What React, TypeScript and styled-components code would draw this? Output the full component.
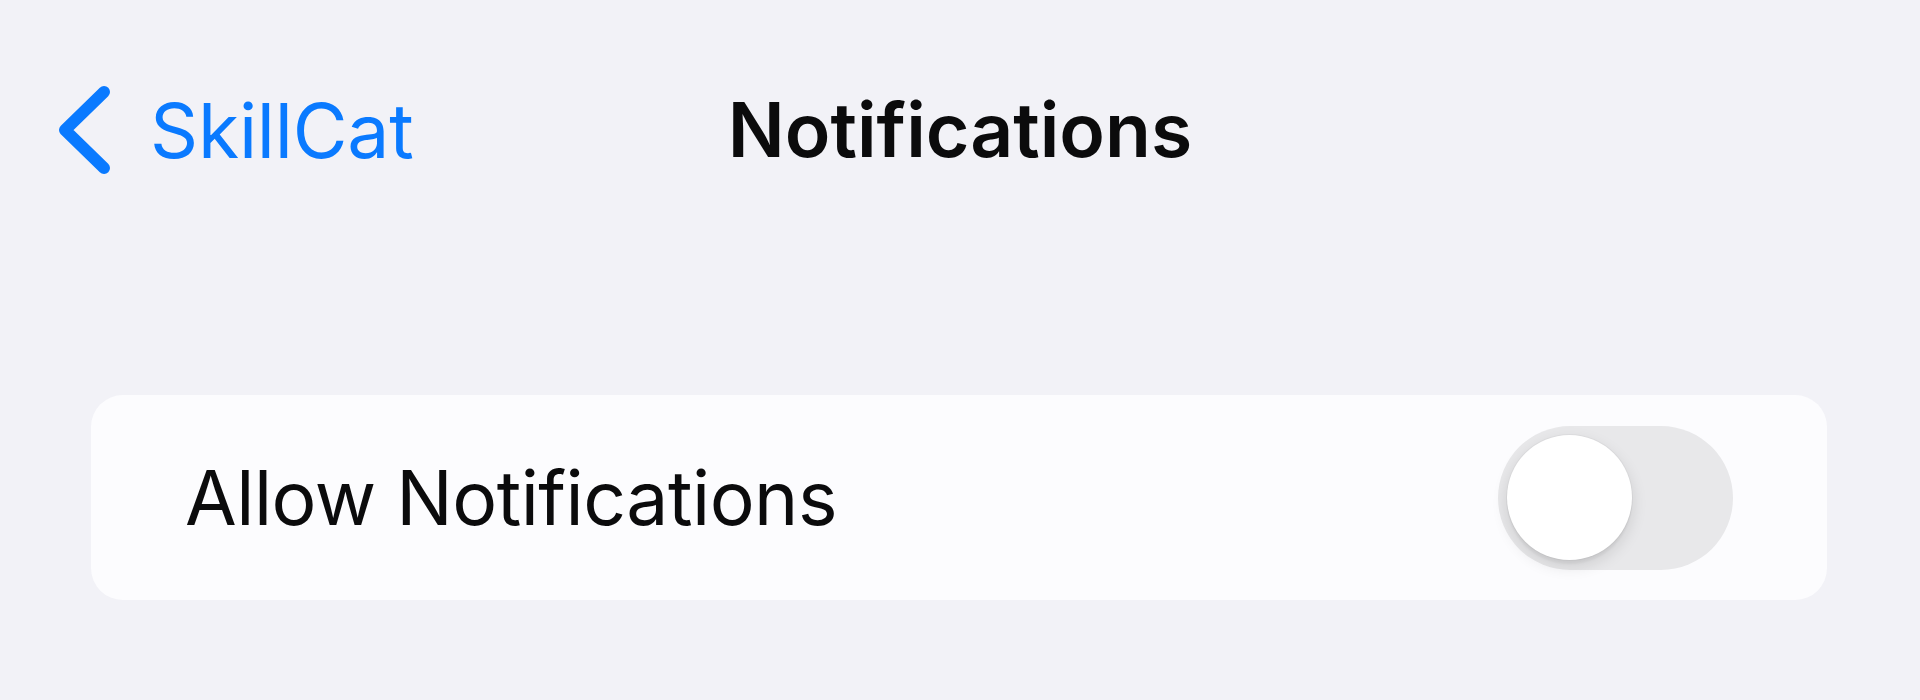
import React from "react";
import styled, { createGlobalStyle } from "styled-components";

const GlobalStyle = createGlobalStyle`
  html, body {
    margin: 0;
    padding: 0;
    background: #f2f2f7;
  }
  body {
    font-family: Inter, "Noto Sans", "Liberation Sans", sans-serif;
    -webkit-font-smoothing: antialiased;
  }
`;

const Page = styled.div`
  width: 1920px;
  height: 700px;
  box-sizing: border-box;
  padding: 70px 93px 0 54px;
  background: #f2f2f7;
  display: flex;
  flex-direction: column;
`;

const NavBar = styled.header`
  height: 120px;
  display: grid;
  grid-template-columns: 1fr auto 1fr;
  align-items: center;
  margin-right: -39px;
`;

const BackButton = styled.button`
  display: flex;
  align-items: center;
  gap: 36px;
  border: none;
  background: none;
  padding: 0;
  cursor: pointer;
  color: #0a7aff;
  font-family: inherit;
  font-size: 75px;
  font-weight: 400;
  letter-spacing: -0.2px;
  justify-self: start;
`;

const Chevron = styled.svg`
  width: 60px;
  height: 90px;
  flex: none;
`;

const Title = styled.h1`
  margin: 0;
  font-size: 75px;
  font-weight: 600;
  color: #0b0b0c;
  letter-spacing: 0;
  line-height: 1.21;
`;

const Card = styled.section`
  margin-top: 205px;
  margin-left: 37px;
  height: 205px;
  box-sizing: border-box;
  background: #fcfcfe;
  border-radius: 32px;
  display: flex;
  align-items: center;
  justify-content: space-between;
  padding: 0 94px 0 94px;
`;

const RowLabel = styled.span`
  font-size: 75px;
  font-weight: 400;
  color: #0b0b0c;
  letter-spacing: -0.5px;
`;

const Track = styled.button<{ $on: boolean }>`
  position: relative;
  width: 235px;
  height: 144px;
  border: none;
  padding: 0;
  border-radius: 72px;
  background: ${(p) => (p.$on ? "#34c759" : "#e8e8ea")};
  cursor: pointer;
  flex: none;
`;

const Knob = styled.span<{ $on: boolean }>`
  position: absolute;
  top: 9px;
  left: ${(p) => (p.$on ? "101px" : "9px")};
  width: 125px;
  height: 125px;
  border-radius: 50%;
  background: #ffffff;
  box-shadow: 0 6px 16px rgba(0, 0, 0, 0.12), 0 4px 2px rgba(0, 0, 0, 0.04),
    0 0 0 1px rgba(0, 0, 0, 0.03);
`;

export default function App() {
  const [on, setOn] = React.useState(false);
  return (
    <>
      <GlobalStyle />
      <Page>
        <NavBar>
          <BackButton type="button">
            <Chevron viewBox="0 0 60 90" aria-hidden="true">
              <polyline
                points="50,7 11,45 50,83"
                fill="none"
                stroke="#0a7aff"
                strokeWidth="12"
                strokeLinecap="round"
                strokeLinejoin="round"
              />
            </Chevron>
            SkillCat
          </BackButton>
          <Title>Notifications</Title>
          <div />
        </NavBar>
        <Card>
          <RowLabel>Allow Notifications</RowLabel>
          <Track
            type="button"
            role="switch"
            aria-checked={on}
            $on={on}
            onClick={() => setOn(!on)}
          >
            <Knob $on={on} />
          </Track>
        </Card>
      </Page>
    </>
  );
}
